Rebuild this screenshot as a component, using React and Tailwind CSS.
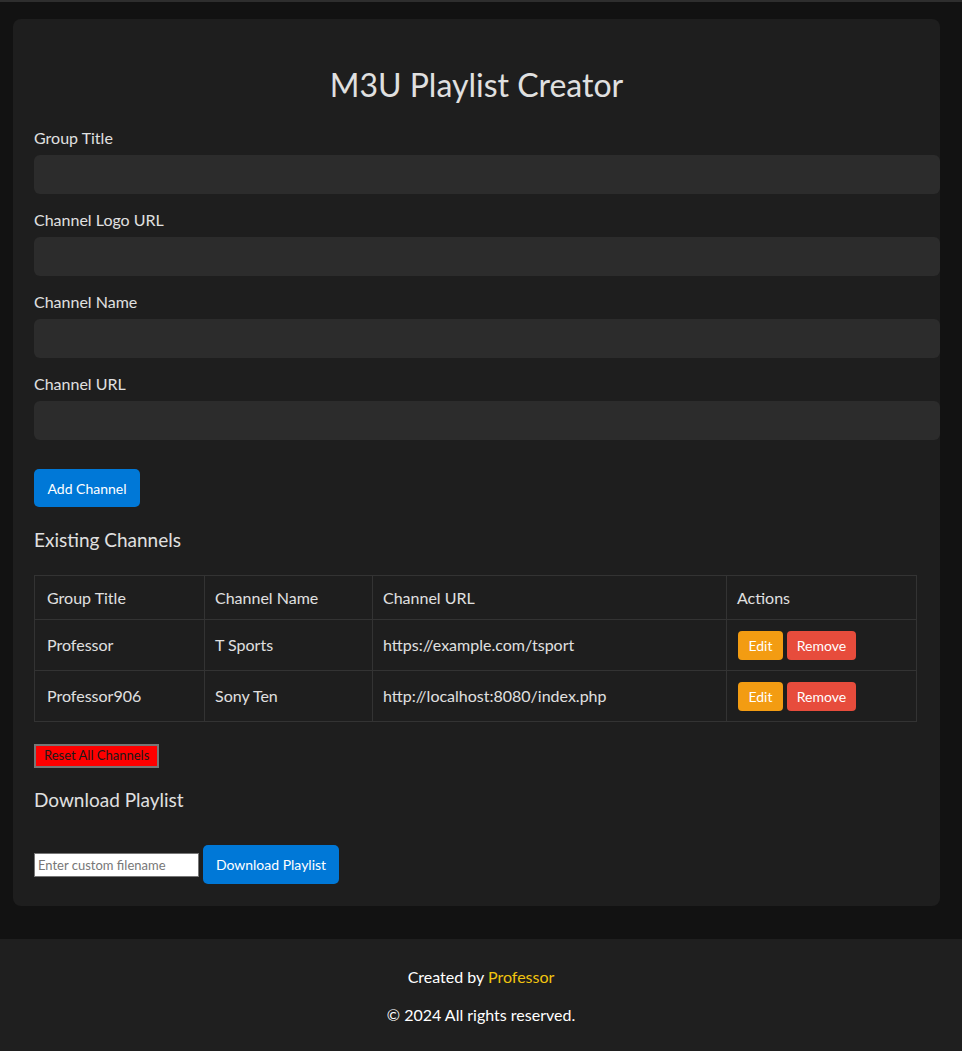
import React from 'react';

const fields = ['Group Title', 'Channel Logo URL', 'Channel Name', 'Channel URL'];

const channels = [
    { group: 'Professor', name: 'T Sports', url: 'https://example.com/tsport' },
    { group: 'Professor906', name: 'Sony Ten', url: 'http://localhost:8080/index.php' },
];

const App = () => {
    return (
        <div className="min-h-[1051px] bg-[#121212] border-t-2 border-[#2e2e2e] text-[#e0e0e0] font-['Lato',sans-serif] flex flex-col">
            <div className="mx-[13px] mt-[17px] w-[927px] bg-[#1e1e1e] rounded-lg pl-[21px] pr-[23px] pt-[47px] pb-[22px]">
                <h1 className="text-center text-[32px] leading-[38px] pl-[2px]">M3U Playlist Creator</h1>

                <div className="mt-[24px] flex flex-col gap-[16px]">
                    {fields.map((label) => (
                        <div key={label} className="flex flex-col gap-[7px]">
                            <label className="text-[16px] leading-[20px]">{label}</label>
                            <input type="text" className="w-[906px] h-[39px] rounded-md bg-[#2c2c2c] outline-none px-[10px]" />
                        </div>
                    ))}
                </div>

                <button className="mt-[29px] h-[38px] w-[106px] rounded-[5px] bg-[#0078d7] text-white text-[14px]">Add Channel</button>

                <h2 className="mt-[21px] text-[19px] leading-[24px]">Existing Channels</h2>

                <table className="mt-[23px] w-[883px] border-collapse text-[16px] table-fixed">
                    <thead>
                        <tr>
                            <th className="w-[170px] border border-[#333] px-[12px] py-[12px] leading-[19px] text-left font-normal">Group Title</th>
                            <th className="w-[168px] border border-[#333] px-[10px] py-[12px] leading-[19px] text-left font-normal">Channel Name</th>
                            <th className="w-[354px] border border-[#333] px-[10px] py-[12px] leading-[19px] text-left font-normal">Channel URL</th>
                            <th className="border border-[#333] px-[10px] py-[12px] leading-[19px] text-left font-normal">Actions</th>
                        </tr>
                    </thead>
                    <tbody>
                        {channels.map((c) => (
                            <tr key={c.group}>
                                <td className="border border-[#333] px-[12px] py-[10px]">{c.group}</td>
                                <td className="border border-[#333] px-[10px] py-[10px]">{c.name}</td>
                                <td className="border border-[#333] px-[10px] py-[10px]">{c.url}</td>
                                <td className="border border-[#333] px-[11px] py-[10px]">
                                    <div className="flex items-center h-[30px] gap-[4px]">
                                        <button className="h-[29px] w-[45px] rounded-[4px] bg-[#f39c12] text-white text-[14px]">Edit</button>
                                        <button className="h-[29px] w-[69px] rounded-[4px] bg-[#e74c3c] text-white text-[14px]">Remove</button>
                                    </div>
                                </td>
                            </tr>
                        ))}
                    </tbody>
                </table>

                <button className="mt-[22px] h-[24px] px-[8px] bg-[#ff0000] text-[#1a1a1a] text-[13px] border-2 border-outset border-[#767676]">Reset All Channels</button>

                <h2 className="mt-[20px] text-[19px] leading-[24px]">Download Playlist</h2>

                <div className="mt-[33px] flex items-center gap-[4px]">
                    <input type="text" placeholder="Enter custom filename" className="w-[165px] h-[24px] bg-white border border-[#767676] text-[13px] text-black px-[3px] placeholder:text-[#777] outline-none" />
                    <button className="h-[39px] w-[136px] rounded-[5px] bg-[#0078d7] text-white text-[14px]">Download Playlist</button>
                </div>
            </div>

            <footer className="mt-[33px] h-[112px] bg-[#1f1f1f] flex flex-col items-center text-white text-[16px] pt-[28px] gap-[18px]">
                <p className="leading-[20px]">Created by <span className="text-[#f1c40f]">Professor</span></p>
                <p className="leading-[20px]">© 2024 All rights reserved.</p>
            </footer>
        </div>
    );
};

export default App;
